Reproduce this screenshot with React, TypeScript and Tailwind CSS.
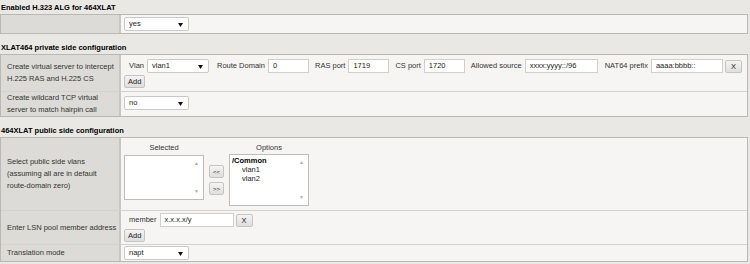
const font = "font-['Liberation_Sans',Arial,sans-serif]"

const Arrow = () => (
  <svg width="5" height="4" viewBox="0 0 5 4" className="absolute right-[5px] top-[5px]">
    <path d="M0 0 L5 0 L2.5 4 Z" fill="#111" />
  </svg>
)

const Select = ({ value, w = 65 }: { value: string; w?: number }) => (
  <div
    className="relative h-[14px] bg-white border border-[#c9c9c9] rounded-[2px] pl-[4px] leading-[12px] text-[#222]"
    style={{ width: w }}
  >
    {value}
    <Arrow />
  </div>
)

const Input = ({ value, w = 41 }: { value: string; w?: number }) => (
  <div
    className="h-[14px] bg-white border border-[#cfcfcf] pl-[4px] leading-[12px] text-[#222]"
    style={{ width: w }}
  >
    {value}
  </div>
)

const Btn = ({ children, wide }: { children: React.ReactNode; wide?: boolean }) => (
  <div className={`h-[13px] ${wide ? 'px-[5px]' : 'px-[3px]'} leading-[11px] border border-[#c4c4c4] rounded-[2px] bg-gradient-to-b from-[#f4f4f4] to-[#dedede] text-[#222] text-center`}>
    {children}
  </div>
)

const Field = ({ label, children }: { label: string; children: React.ReactNode }) => (
  <div className="flex items-center gap-[3px]">
    <span className="text-[#333]">{label}</span>
    {children}
  </div>
)

const Row = ({ label, children, first, pad = 'py-[2px]' }: { label?: React.ReactNode; children: React.ReactNode; first?: boolean; pad?: string }) => (
  <div className={`flex ${first ? '' : 'border-t border-[#d3d2cf]'}`}>
    <div className="w-[120px] shrink-0 bg-[#dcdbd7] border-r-2 border-[#c7c6c3] pl-[6px] flex items-center leading-[12px] text-[#333]">
      {label}
    </div>
    <div className={`flex-1 bg-[#f6f5f3] pl-[3px] ${pad}`}>{children}</div>
  </div>
)

const Heading = ({ children }: { children: React.ReactNode }) => (
  <div className="font-bold text-black pl-[1px] leading-[12px] h-[13px] pt-[1px]">{children}</div>
)

const Table = ({ children }: { children: React.ReactNode }) => (
  <div className="w-[748px] border border-[#b9b8b5]">{children}</div>
)

const ListBox = ({ children, w, h }: { children?: React.ReactNode; w: number; h: number }) => (
  <div className="relative bg-white border border-[#bdbdbd]" style={{ width: w, height: h }}>
    <div className="pl-[2px] pt-[1px] leading-[9px] text-[#222]">{children}</div>
    <div className="absolute right-[4px] top-[5px] text-[#aaa] text-[5px] leading-[5px]">▲</div>
    <div className="absolute right-[4px] bottom-[5px] text-[#aaa] text-[5px] leading-[5px]">▼</div>
  </div>
)

export default function App() {
  return (
    <div className={`${font} w-[750px] h-[264px] overflow-hidden bg-[#e9e8e5] text-[7.5px] pt-[1px]`}>
      <Heading>Enabled H.323 ALG for 464XLAT</Heading>
      <Table>
        <Row first>
          <Select value="yes" />
        </Row>
      </Table>

      <div className="h-[7px]" />
      <Heading>XLAT464 private side configuration</Heading>
      <Table>
        <Row first label={<span>Create virtual server to intercept<br />H.225 RAS and H.225 CS</span>}>
          <div className="flex items-center gap-[6px] pl-[5px] pt-[2px]">
            <Field label="Vlan"><Select value="vlan1" w={62} /></Field>
            <div className="ml-[2px]"><Field label="Route Domain"><Input value="0" /></Field></div>
            <Field label="RAS port"><Input value="1719" /></Field>
            <Field label="CS port"><Input value="1720" /></Field>
            <Field label="Allowed source"><Input value="xxxx:yyyy::/96" w={73} /></Field>
            <div className="flex items-center gap-[2px] ml-[1px]">
              <Field label="NAT64 prefix"><Input value="aaaa:bbbb::" w={72} /></Field>
              <Btn wide>X</Btn>
            </div>
          </div>
          <div className="flex mt-[2px] mb-[1px]">
            <Btn>Add</Btn>
          </div>
        </Row>
        <Row label={<span>Create wildcard TCP virtual<br />server to match hairpin call</span>} pad="py-[4px]">
          <Select value="no" />
        </Row>
      </Table>

      <div className="h-[7px]" />
      <Heading>464XLAT public side configuration</Heading>
      <Table>
        <Row first pad="pt-[4px] pb-[4px]" label={<span>Select public side vlans<br />(assuming all are in default<br />route-domain zero)</span>}>
          <div className="flex items-start gap-[5px]">
            <div className="flex flex-col items-center">
              <span className="text-[#333] leading-[11px] h-[13px]">Selected</span>
              <ListBox w={80} h={45} />
            </div>
            <div className="flex flex-col gap-[4px] pt-[23px]">
              <Btn><span className="text-[6px]">&lt;&lt;</span></Btn>
              <Btn><span className="text-[6px]">&gt;&gt;</span></Btn>
            </div>
            <div className="flex flex-col items-center">
              <span className="text-[#333] leading-[11px] h-[12px]">Options</span>
              <ListBox w={80} h={52}>
                <div className="font-bold text-black">/Common</div>
                <div className="pl-[10px]">vlan1</div>
                <div className="pl-[10px]">vlan2</div>
              </ListBox>
            </div>
          </div>
        </Row>
        <Row label="Enter LSN pool member address">
          <div className="flex items-center gap-[2px] pl-[5px]">
            <Field label="member"><Input value="x.x.x.x/y" w={74} /></Field>
            <Btn wide>X</Btn>
          </div>
          <div className="flex mt-[2px]">
            <Btn>Add</Btn>
          </div>
        </Row>
        <Row label="Translation mode" pad="py-[1px]">
          <Select value="napt" />
        </Row>
      </Table>
    </div>
  )
}
